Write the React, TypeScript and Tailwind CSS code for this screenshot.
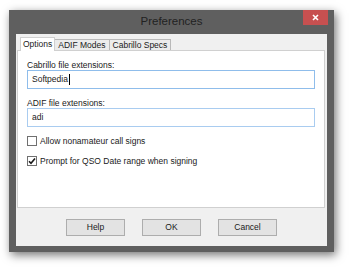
import * as React from 'react'

function Tab({ label, active }: { label: string; active?: boolean }) {
  if (active) {
    return (
      <div className="relative z-10 -mb-px flex h-[14px] items-center border border-b-0 border-[#d0d0d0] bg-white px-[2px]">
        {label}
      </div>
    )
  }
  return (
    <div className="flex h-[11px] items-center border border-b-0 border-[#b9b9b9] bg-[#ececec] px-[3px] -ml-px first:ml-0">
      {label}
    </div>
  )
}

function CheckRow({ label, checked }: { label: string; checked?: boolean }) {
  return (
    <div className="flex h-[10px] items-center gap-[3px]">
      <div className="flex h-[10px] w-[10px] items-center justify-center border border-[#707070] bg-white">
        {checked ? (
          <svg width="8" height="8" viewBox="0 0 8 8">
            <path d="M1 4.2 L3 6.3 L7 1.4" fill="none" stroke="#1a1a1a" strokeWidth="1.6" />
          </svg>
        ) : null}
      </div>
      <span className="leading-[10px]">{label}</span>
    </div>
  )
}

function DialogButton({ label }: { label: string }) {
  return (
    <div className="flex h-[17px] w-[59px] items-center justify-center border border-[#adadad] bg-[#e3e3e3]">
      {label}
    </div>
  )
}

export default function App() {
  return (
    <div className="relative h-[267px] w-[350px] overflow-hidden bg-white font-['Liberation_Sans',Arial,sans-serif] text-[8.5px] text-[#1a1a1a]">
      <div className="ml-[9px] mt-[10px] flex h-[242px] w-[325px] flex-col bg-[#5f5f5f] shadow-[2px_3px_9px_rgba(0,0,0,0.55)]">
        <div className="relative flex h-[24px] items-center justify-center text-[11.5px] text-[#222222]">
          Preferences
          <div className="absolute right-[6px] top-0 flex h-[15px] w-[25px] items-center justify-center bg-[#c75050]">
            <svg width="7" height="7" viewBox="0 0 7 7">
              <path d="M1 1 L6 6 M6 1 L1 6" stroke="white" strokeWidth="1.6" />
            </svg>
          </div>
        </div>
        <div className="mx-[7px] flex h-[212px] flex-col bg-[#f0f0f0]">
          <div className="flex h-[16px] items-end pl-[4px]">
            <Tab label="Options" active />
            <Tab label="ADIF Modes" />
            <Tab label="Cabrillo Specs" />
          </div>
          <div className="ml-[1px] mr-[2px] flex h-[158px] flex-col border border-[#d0d0d0] bg-white px-[9px] pt-[9px]">
            <div className="leading-[10px]">Cabrillo file extensions:</div>
            <div className="flex h-[19px] items-center border border-[#8fbdeb] pl-[4px]">
              Softpedia
              <span className="ml-px h-[11px] w-px bg-black" />
            </div>
            <div className="mt-[9px] leading-[10px]">ADIF file extensions:</div>
            <div className="flex h-[19px] items-center border border-[#a9ccf0] pl-[4px]">adi</div>
            <div className="mt-[9px] flex flex-col gap-[10px]">
              <CheckRow label="Allow nonamateur call signs" />
              <CheckRow label="Prompt for QSO Date range when signing" checked />
            </div>
          </div>
          <div className="mt-[11px] flex justify-center gap-[17px]">
            <DialogButton label="Help" />
            <DialogButton label="OK" />
            <DialogButton label="Cancel" />
          </div>
        </div>
      </div>
    </div>
  )
}
